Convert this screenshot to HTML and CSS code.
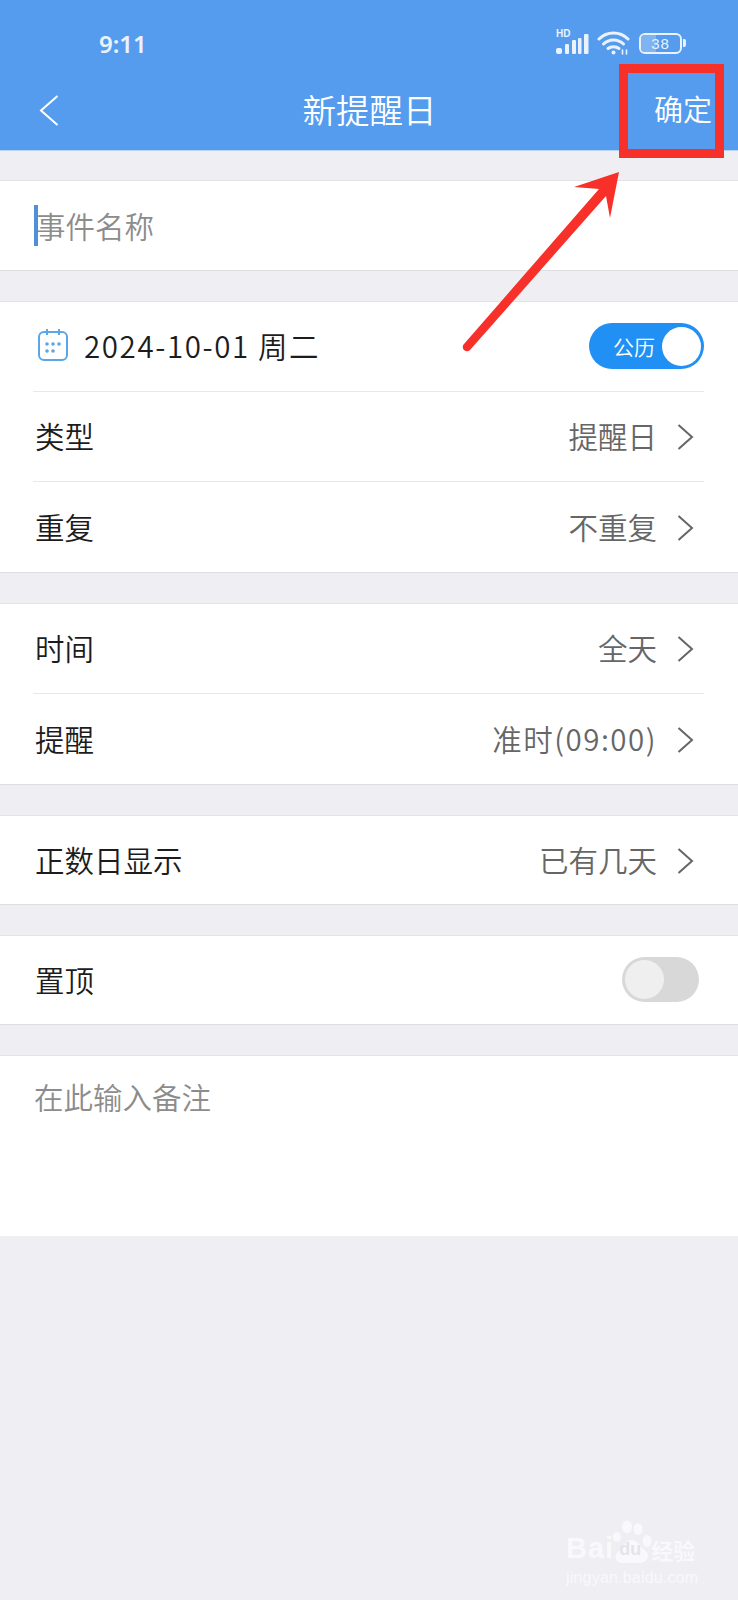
FILE: index.html
```html
<!DOCTYPE html>
<html>
  <head>
    <title>新提醒日</title>
    <meta name="viewport" content="width=device-width, initial-scale=1" />
    <link rel="stylesheet" href="styles.css">
  </head>
  <body>
    <div class="page">
      <header class="top-bar">
        <div class="status-bar">
          <span class="clock">9:11</span>
          <div class="status-icons">
            <div class="signal">
              <span class="signal-hd">HD</span>
              <svg width="33" height="22" viewBox="0 0 33 22">
                <g fill="#eaf3fd">
                  <rect x="0" y="15" width="6" height="6" rx="2" />
                  <rect x="9" y="11" width="4" height="10" rx="1" />
                  <rect x="16" y="7" width="4" height="14" rx="1" />
                  <rect x="22" y="5" width="3.500" height="16" rx="1" />
                  <rect x="28" y="1" width="4.500" height="20" rx="1" />
                </g>
              </svg>
            </div>
            <svg class="wifi" width="33" height="24" viewBox="0 0 33 24" fill="none" stroke="#eaf3fd" stroke-width="3" stroke-linecap="round">
              <path d="M2 8 C10 0 23 0 31 8" />
              <path d="M6.500 13 C12 7.500 21 7.500 26.500 13" />
              <path d="M11 17.500 C14 15 19 15 22 17.500" />
              <circle cx="16.500" cy="21.500" r="2" fill="#eaf3fd" stroke="none" />
              <path d="M25.500 19 V23 M29.500 19 V23" stroke-width="1.600" />
            </svg>
            <div class="battery">
              <div class="battery-body">
                <span class="battery-level"></span>
                <span class="battery-text">38</span>
              </div>
              <span class="battery-tip"></span>
            </div>
          </div>
        </div>
        <div class="nav-bar">
          <svg class="back" width="20" height="31" viewBox="0 0 20 31" fill="none" stroke="#fff" stroke-width="2">
            <path d="M18.500 1 L2 15.500 L18.500 30" />
          </svg>
          <h1 class="nav-title">新提醒日</h1>
          <span class="nav-action">确定</span>
        </div>
      </header>

      <section class="group">
        <div class="name-row">
          <span class="caret"></span>
          <span class="placeholder name-placeholder">事件名称</span>
        </div>
      </section>

      <section class="group">
        <div class="row">
          <div class="date-cell">
            <svg width="30" height="34" viewBox="0 0 30 34" fill="none" stroke="#5aa6e6" stroke-width="2">
              <rect x="1" y="4" width="28" height="28" rx="5" />
              <path d="M9 1 V7 M21 1 V7" />
              <g fill="#5aa6e6" stroke="none">
                <circle cx="9" cy="16" r="1.800" />
                <circle cx="15" cy="16" r="1.800" />
                <circle cx="21" cy="16" r="1.800" />
                <circle cx="9" cy="23" r="1.800" />
                <circle cx="15" cy="23" r="1.800" />
              </g>
            </svg>
            <span class="date-text">2024-10-01 周二</span>
          </div>
          <div class="calendar-switch">
            <span class="calendar-switch-label">公历</span>
            <span class="calendar-switch-knob"></span>
          </div>
        </div>
        <div class="row">
          <span class="label">类型</span>
          <div class="value">提醒日
            <svg class="chevron" width="17" height="26" viewBox="0 0 17 26" fill="none" stroke="#666" stroke-width="2">
              <path d="M1.500 1 L15 13 L1.500 25" />
            </svg>
          </div>
        </div>
        <div class="row">
          <span class="label">重复</span>
          <div class="value">不重复
            <svg class="chevron" width="17" height="26" viewBox="0 0 17 26" fill="none" stroke="#666" stroke-width="2">
              <path d="M1.500 1 L15 13 L1.500 25" />
            </svg>
          </div>
        </div>
      </section>

      <section class="group">
        <div class="row">
          <span class="label">时间</span>
          <div class="value">全天
            <svg class="chevron" width="17" height="26" viewBox="0 0 17 26" fill="none" stroke="#666" stroke-width="2">
              <path d="M1.500 1 L15 13 L1.500 25" />
            </svg>
          </div>
        </div>
        <div class="row">
          <span class="label">提醒</span>
          <div class="value value-time">准时(09:00)
            <svg class="chevron" width="17" height="26" viewBox="0 0 17 26" fill="none" stroke="#666" stroke-width="2">
              <path d="M1.500 1 L15 13 L1.500 25" />
            </svg>
          </div>
        </div>
      </section>

      <section class="group">
        <div class="row">
          <span class="label">正数日显示</span>
          <div class="value">已有几天
            <svg class="chevron" width="17" height="26" viewBox="0 0 17 26" fill="none" stroke="#666" stroke-width="2">
              <path d="M1.500 1 L15 13 L1.500 25" />
            </svg>
          </div>
        </div>
      </section>

      <section class="group">
        <div class="row">
          <span class="label">置顶</span>
          <div class="pin-switch">
            <span class="pin-switch-knob"></span>
          </div>
        </div>
      </section>

      <section class="group notes">
        <span class="placeholder">在此输入备注</span>
      </section>

      <!-- Annotation drawn over the screenshot -->
      <svg class="annotation" width="738" height="360" viewBox="0 0 738 360">
        <rect x="623.500" y="68.500" width="96" height="85" fill="none" stroke="#f8302a" stroke-width="9" />
        <path d="M464 344 L599 189 L574 187 L619 172 L610 218 L606 196 L470 350 A4 4 0 0 1 464 344 Z" fill="#f8302a" />
      </svg>

      <!-- Watermark -->
      <div class="watermark">
        <div class="watermark-logo">
          <span class="watermark-bai">Bai</span>
          <div class="watermark-paw">
            <svg width="42" height="44" viewBox="0 0 42 44" fill="#f9f9fb">
              <ellipse cx="6" cy="17" rx="4" ry="5" />
              <ellipse cx="16" cy="7" rx="5" ry="6.500" />
              <ellipse cx="27" cy="9" rx="4.500" ry="6" />
              <ellipse cx="36" cy="21" rx="4.500" ry="6" />
              <path d="M20 20 C27 20 29 27 35 31 C40 37 35 43 28 43 L12 43 C4 43 2 35 8 31 C13 27 14 20 20 20 Z" />
            </svg>
            <span class="watermark-du">du</span>
          </div>
          <span class="watermark-cn">经验</span>
        </div>
        <span class="watermark-url">jingyan.baidu.com</span>
      </div>
    </div>
  </body>
</html>
```

FILE: styles.css
```css
* {
  box-sizing: border-box;
}

body {
  margin: 0;
  background-color: #eeeef3;
  font-family: "Noto Sans CJK SC", "Noto Sans", sans-serif;
  font-weight: 350;
}

.page {
  position: relative;
  width: 738px;
  height: 1600px;
  overflow: hidden;
  background-color: #eeeef3;
}

/* Top bar */
.top-bar {
  height: 151px;
  background-color: #559cee;
  border-bottom: 1px solid #b9d3f3;
  color: #fff;
}

.status-bar {
  display: flex;
  justify-content: space-between;
  align-items: center;
  height: 86px;
  padding: 0 52px 0 99px;
}

.clock {
  font-family: "Noto Sans", sans-serif;
  font-size: 24px;
  font-weight: 600;
  color: #eaf3fd;
}

.status-icons {
  display: flex;
  align-items: center;
  gap: 9px;
}

.signal {
  position: relative;
  width: 33px;
  height: 24px;
  margin-right: -1px;
  padding-top: 2px;
}

.signal-hd {
  position: absolute;
  left: 0;
  top: -3px;
  font-family: "Liberation Sans", sans-serif;
  font-size: 10px;
  font-weight: 700;
  color: #eaf3fd;
}

.battery {
  display: flex;
  align-items: center;
  gap: 1px;
}

.battery-body {
  position: relative;
  display: flex;
  justify-content: center;
  align-items: center;
  width: 43px;
  height: 21px;
  border: 2px solid #eaf3fd;
  border-radius: 6px;
  overflow: hidden;
}

.battery-level {
  position: absolute;
  left: 0;
  top: 0;
  bottom: 0;
  width: 38%;
  background-color: #7fb3f1;
}

.battery-text {
  position: relative;
  font-family: "Liberation Sans", sans-serif;
  font-size: 15px;
  letter-spacing: 1px;
  color: #eaf3fd;
}

.battery-tip {
  width: 3px;
  height: 8px;
  border-radius: 0 2px 2px 0;
  background-color: #eaf3fd;
}

.nav-bar {
  display: flex;
  justify-content: space-between;
  align-items: center;
  height: 44px;
  padding: 0 26px 0 39px;
}

.back {
  margin-top: 4px;
}

.nav-title {
  margin: 0 0 0 26px;
  font-size: 33.500px;
  font-weight: 350;
}

.nav-action {
  font-size: 29px;
}

/* Setting groups */
.group {
  margin-top: 30px;
  background-color: #fff;
  border-top: 1px solid #e3e3e6;
  border-bottom: 1px solid #dfdfe2;
}

.group:first-of-type {
  margin-top: 29px;
}

.name-row {
  display: flex;
  align-items: center;
  height: 89px;
  padding-left: 34px;
}

.caret {
  width: 4px;
  height: 41px;
  background-color: #4f90d8;
}

.placeholder {
  font-size: 29.500px;
  color: #8c8c8c;
}

.name-placeholder {
  margin-top: -2px;
  margin-left: -2px;
}

.row {
  display: flex;
  justify-content: space-between;
  align-items: center;
  height: 90px;
  margin-left: 33px;
  margin-right: 34px;
  padding-bottom: 3px;
  border-bottom: 1px solid #e8e8ea;
}

.row:last-child {
  border-bottom: none;
}

.row:only-child {
  height: 88px;
}

.label {
  margin-left: 2px;
  font-size: 29.500px;
  color: #1c1c1c;
}

.date-cell {
  display: flex;
  align-items: center;
  gap: 16px;
  margin-left: 5px;
}

.date-text {
  font-size: 29.500px;
  letter-spacing: 1.600px;
  color: #1c1c1c;
}

.value {
  display: flex;
  align-items: center;
  font-size: 29.500px;
  color: #666;
}

.value-time {
  letter-spacing: 1.500px;
}

.chevron {
  margin-top: 4px;
  margin-left: 20px;
  margin-right: 10px;
}

/* Switches */
.calendar-switch {
  display: flex;
  justify-content: flex-end;
  align-items: center;
  width: 115px;
  height: 46px;
  margin-top: 2px;
  padding-right: 3px;
  border-radius: 23px;
  background-color: #2090f4;
}

.calendar-switch-label {
  margin-right: 7px;
  font-size: 21px;
  color: #fff;
}

.calendar-switch-knob {
  width: 39px;
  height: 39px;
  border-radius: 50%;
  background-color: #fff;
}

.pin-switch {
  display: flex;
  align-items: center;
  width: 77px;
  height: 45px;
  margin-top: 2px;
  margin-right: 5px;
  padding-left: 3px;
  border-radius: 23px;
  background-color: #d8d8d8;
}

.pin-switch-knob {
  width: 39px;
  height: 39px;
  border-radius: 50%;
  background-color: #efefef;
}

.notes {
  height: 181px;
  padding: 19px 0 0 34px;
  border-bottom: none;
}

/* Overlays */
.annotation {
  position: absolute;
  left: 0;
  top: 0;
}

.watermark {
  position: absolute;
  left: 566px;
  top: 1518px;
  width: 140px;
  color: #f9f9fb;
}

.watermark-logo {
  display: flex;
  align-items: flex-end;
  height: 46px;
}

.watermark-bai {
  font-family: "Liberation Sans", sans-serif;
  font-size: 29px;
  font-weight: 700;
  line-height: 32px;
  letter-spacing: 1px;
}

.watermark-paw {
  position: relative;
  width: 42px;
  height: 44px;
  margin-left: -3px;
}

.watermark-du {
  position: absolute;
  left: 8px;
  top: 19px;
  font-family: "Liberation Sans", sans-serif;
  font-size: 18px;
  font-weight: 700;
  color: #e4e4ea;
}

.watermark-cn {
  margin-left: -2px;
  font-size: 22px;
  font-weight: 700;
  line-height: 30px;
}

.watermark-url {
  display: block;
  margin-top: 5px;
  font-family: "Liberation Sans", sans-serif;
  font-size: 16px;
  letter-spacing: 0.200px;
  white-space: nowrap;
}
```
